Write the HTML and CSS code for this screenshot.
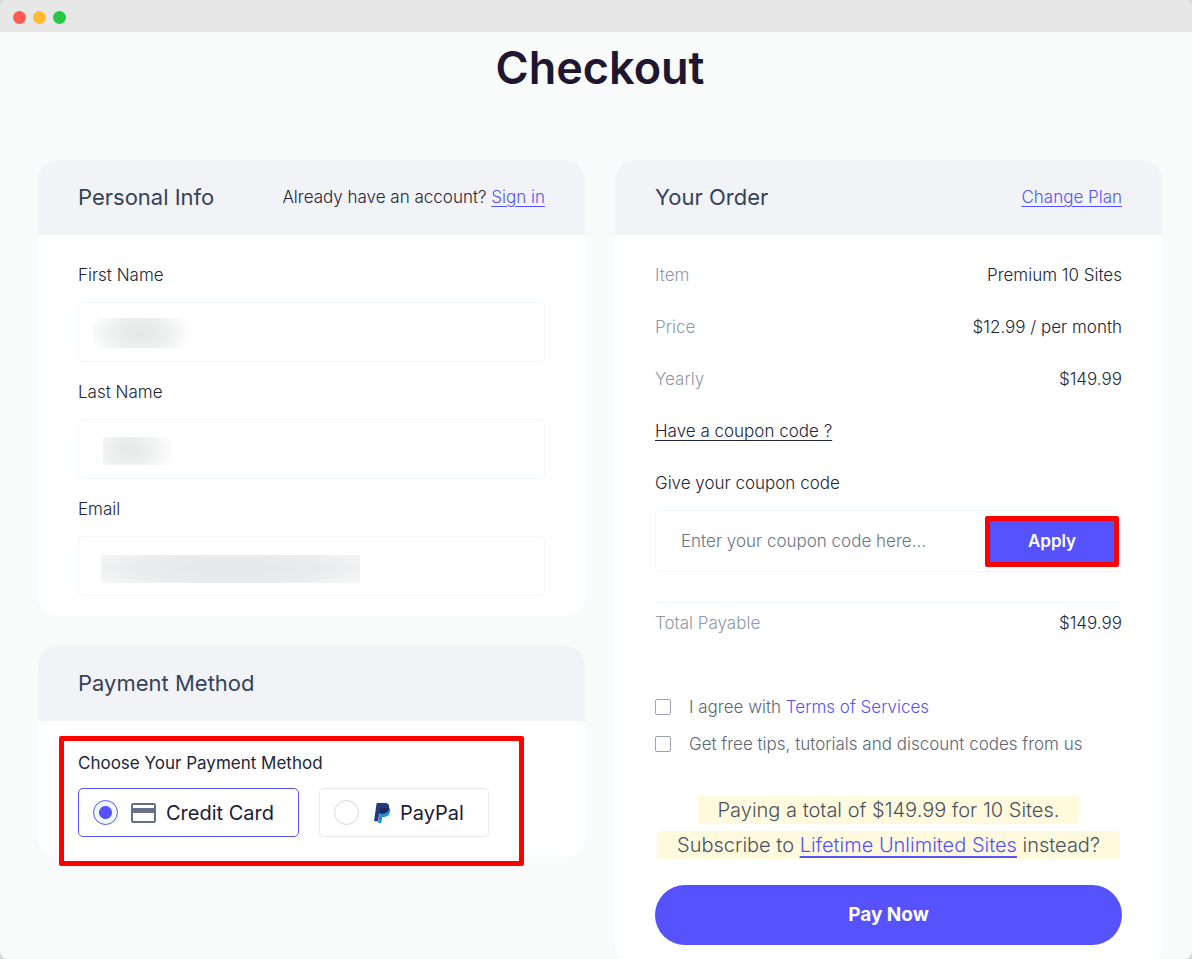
FILE: index.html
```html
<!DOCTYPE html>
<html lang="en">
<head>
<meta charset="utf-8">
<meta name="viewport" content="width=device-width, initial-scale=1">
<title>Checkout</title>
<link rel="stylesheet" href="styles.css">
</head>
<body>
<div class="window">
  <div class="titlebar"><span class="dot dot-close"></span><span class="dot dot-min"></span><span class="dot dot-max"></span></div>
  <main class="page">
    <h1 class="title">Checkout</h1>
    <form class="columns">
      <div class="column">
        <section class="card">
          <header class="card-head">
            <h2 class="card-title">Personal Info</h2>
            <p class="account">Already have an account? <a class="link underlined" href="#">Sign in</a></p>
          </header>
          <div class="card-body fields">
            <div class="field">
              <label for="first">First Name</label>
              <div class="input-wrap"><input class="input" id="first" type="text"><span class="redacted redacted-first"></span></div>
            </div>
            <div class="field">
              <label for="last">Last Name</label>
              <div class="input-wrap"><input class="input" id="last" type="text"><span class="redacted redacted-last"></span></div>
            </div>
            <div class="field">
              <label for="email">Email</label>
              <div class="input-wrap"><input class="input" id="email" type="email"><span class="redacted redacted-email"></span></div>
            </div>
          </div>
        </section>
        <section class="card card-payment">
          <header class="card-head"><h2 class="card-title">Payment Method</h2></header>
          <div class="card-body payment">
            <p class="choose" id="choose">Choose Your Payment Method</p>
            <div class="options" role="radiogroup" aria-labelledby="choose">
              <label class="option option-on">
                <input class="radio" type="radio" name="method" checked>
                <svg class="icon-card" viewBox="0 0 26 20" aria-hidden="true"><rect x="1" y="1" width="23" height="18" rx="1" fill="none" stroke="#66708a" stroke-width="2"/><path fill="#66708a" d="M1 5h23v5H1z"/></svg>
                <span>Credit Card</span>
              </label>
              <label class="option">
                <input class="radio" type="radio" name="method">
                <svg class="icon-paypal" viewBox="0 0 17 20" aria-hidden="true"><path fill="#1f8fd8" d="M6 8 15 4.500C16.500 6 16.600 8.500 15.300 11c-1.200 2.300-3.100 3-5.900 3H8.200l-1 5.900H4z"/><path fill="#253b80" d="M3.200 0h7.300c3.600 0 5.100 1.900 4.600 4.900-.7 4.100-3.300 5.700-7 5.700H6.200c-.7 0-1 .4-1.100 1L4 18.300H.6c-.4 0-.6-.3-.5-.7L2.500.7c.1-.5.300-.7.700-.7z"/><path fill="#1c2a5e" d="M6.500 4.900h7.600l1 .1c-.7 4-3.300 5.600-7 5.600H6.200l-.6.200z"/></svg>
                <span>PayPal</span>
              </label>
            </div>
            <div class="marker"></div>
          </div>
        </section>
      </div>
      <section class="card">
        <header class="card-head">
          <h2 class="card-title">Your Order</h2>
          <a class="link underlined" href="#">Change Plan</a>
        </header>
        <div class="card-body order">
          <dl class="rows">
            <div class="row"><dt>Item</dt><dd>Premium 10 Sites</dd></div>
            <div class="row"><dt>Price</dt><dd>$12.99 / per month</dd></div>
            <div class="row"><dt>Yearly</dt><dd>$149.99</dd></div>
          </dl>
          <a class="coupon-toggle underlined" href="#">Have a coupon code ?</a>
          <label for="coupon">Give your coupon code</label>
          <div class="coupon">
            <input class="coupon-input" id="coupon" type="text" placeholder="Enter your coupon code here...">
            <button class="apply" type="button">Apply</button>
          </div>
          <dl class="total"><div class="row"><dt>Total Payable</dt><dd>$149.99</dd></div></dl>
          <div class="checks">
            <div class="check"><input class="box" id="terms" type="checkbox"><label for="terms">I agree with <a class="link" href="#">Terms of Services</a></label></div>
            <div class="check"><input class="box" id="tips" type="checkbox"><label for="tips">Get free tips, tutorials and discount codes from us</label></div>
          </div>
          <p class="notice"><span class="mark">Paying a total of $149.99 for 10 Sites.<br>Subscribe to <a class="link lifetime" href="#">Lifetime Unlimited Sites</a> instead?</span></p>
          <button class="pay" type="submit">Pay Now</button>
        </div>
      </section>
    </form>
  </main>
</div>
</body>
</html>
```

FILE: styles.css
```css
* { box-sizing: border-box; }

body {
  margin: 0;
  background: #d8d8d8;
  color: #232638;
  font-family: Inter, "Open Sans", sans-serif;
  font-size: 17px;
  font-weight: 300;
  line-height: 24px;
}

h1, h2, p, dl, dd { margin: 0; }
input, button { font: inherit; }

.window {
  height: 100vh;
  overflow: hidden;
  border-radius: 8px;
  background: #f9fbfa;
}

.titlebar {
  display: flex;
  align-items: center;
  gap: 7px;
  height: 32px;
  padding: 2px 13px 0;
  background: #e7e7e7;
}
.dot { width: 13px; height: 13px; border-radius: 50%; }
.dot-close { background: #ff5a52; }
.dot-min { background: #ffbc2e; }
.dot-max { background: #28c840; }

.page { padding: 8px 30px 0 38px; }
.title {
  color: #1f1630;
  font-size: 45px;
  font-weight: 600;
  line-height: 56px;
  text-align: center;
}

.columns {
  display: grid;
  grid-template-columns: 1fr 1fr;
  gap: 30px;
  margin-top: 64px;
}
.column { display: flex; flex-direction: column; align-items: stretch; gap: 30px; }

.card { border-radius: 20px; background: #fff; }
.card-head {
  display: flex;
  align-items: center;
  justify-content: space-between;
  height: 75px;
  padding: 0 40px 2px;
  border-radius: 20px 20px 0 0;
  background: #f2f3f7;
}
.card-title { color: #36425a; font-size: 22px; font-weight: 400; }
.card-body { padding: 28px 40px 20px; }

.link { color: #5653fe; text-decoration: none; }
.underlined { text-decoration: underline; text-decoration-thickness: 1px; text-underline-offset: 3px; }

.fields { display: flex; flex-direction: column; gap: 18px; }
.field { display: flex; flex-direction: column; gap: 15px; }
.input-wrap { position: relative; }
.input {
  display: block;
  width: 100%;
  height: 60px;
  padding: 0 24px;
  border: 1px solid #eef6ff;
  border-radius: 5px;
  background: #fff;
}
.redacted { position: absolute; height: 28px; pointer-events: none; }
.redacted-first {
  top: 16px;
  left: 14px;
  width: 100px;
  height: 30px;
  background: radial-gradient(ellipse 54px 32px at 48px 50%, #e6e8e8, #eeefef 50%, #fff);
}
.redacted-last {
  top: 18px;
  left: 25px;
  width: 70px;
  background: radial-gradient(ellipse 48px 38px at 26px 45%, #e6e8e8, #f0f1f1 50%, #fff);
}
.redacted-email {
  top: 19px;
  left: 23px;
  width: 259px;
  background: radial-gradient(ellipse 160px 26px at 50% 45%, #e5e6e8, #eaebec 55%, #f5f6f6);
}

.payment { position: relative; padding-top: 30px; }
.choose { font-weight: 400; }
.options { display: flex; gap: 20px; margin-top: 13px; }
.option {
  display: flex;
  align-items: center;
  height: 49px;
  padding: 0 24px 0 14px;
  border: 1px solid #e8e9ec;
  border-radius: 5px;
  color: #1c1a38;
  font-size: 20px;
  font-weight: 400;
}
.option-on { border-color: #5653fe; }
.radio {
  appearance: none;
  width: 25px;
  height: 25px;
  margin: 0;
  border: 1px solid #d5d9e2;
  border-radius: 50%;
  background: #fff;
}
.radio:checked {
  border-color: #5653fe;
  background: radial-gradient(circle, #5653fe 6px, #f0f8ff 7px);
}
.icon-card { width: 26px; height: 20px; margin: 0 9px 0 13px; }
.icon-paypal { width: 17px; height: 20px; margin: 0 9px 0 15px; }
.marker {
  position: absolute;
  inset: 15px 61px -9px 21px;
  border: 5px solid #f00;
  border-radius: 2px;
  pointer-events: none;
}

.order { display: flex; flex-direction: column; }
.rows { display: flex; flex-direction: column; gap: 28px; }
.row { display: flex; justify-content: space-between; }
dt { color: #8f97aa; }
.coupon-toggle { align-self: flex-start; margin: 28px 0; color: inherit; }
.coupon {
  display: flex;
  align-items: center;
  height: 62px;
  margin: 15px 0 30px;
  padding: 0 2px 0 25px;
  border: 1px solid #eef6ff;
  border-radius: 5px;
}
.coupon-input { flex: 1; min-width: 0; padding: 0; border: 0; background: none; }
.coupon-input::placeholder { color: #6b7584; opacity: 1; }
.apply {
  width: 134px;
  height: 51px;
  border: 5px solid #f00;
  border-radius: 2px;
  background: #5653fe;
  color: #fff;
  font-weight: 600;
}
.total { padding-top: 8px; border-top: 1px solid #edf5fd; }

.checks { display: flex; flex-direction: column; gap: 13px; margin-top: 60px; color: #5c6676; }
.check { display: flex; align-items: center; gap: 18px; }
.box {
  appearance: none;
  width: 16px;
  height: 16px;
  margin: 0;
  border: 1px solid #9ba2b3;
  border-radius: 2px;
  background: #fff;
}

.notice {
  margin-top: 37px;
  color: #4b5260;
  font-size: 20px;
  line-height: 35px;
  text-align: center;
  white-space: nowrap;
}
.mark {
  padding: 2px 20px;
  border-radius: 3px;
  background: #fffadd;
  -webkit-box-decoration-break: clone;
  box-decoration-break: clone;
}
.lifetime { text-decoration: underline; text-decoration-thickness: 2px; text-underline-offset: 4px; }
.pay {
  height: 60px;
  margin-top: 22px;
  border: 0;
  border-radius: 30px;
  background: #5653fe;
  color: #fff;
  font-size: 19px;
  font-weight: 700;
}
```
